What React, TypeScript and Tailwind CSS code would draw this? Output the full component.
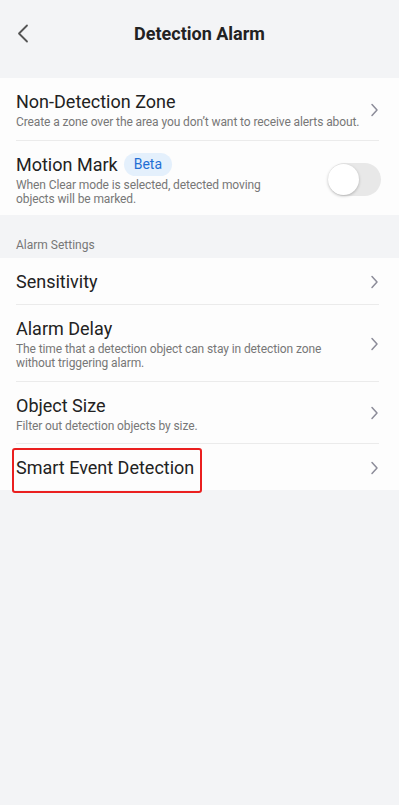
import React from "react";

function Chevron() {
  return (
    <svg width="9" height="14" viewBox="0 0 9 14" fill="none" className="shrink-0">
      <path d="M2 1.5L7 7L2 12.5" stroke="#8c8c99" strokeWidth="1.5" strokeLinecap="round" strokeLinejoin="round" />
    </svg>
  );
}

function Row({ title, desc, last, pb = "pb-[10px]", children }: { title: React.ReactNode; desc?: React.ReactNode; last?: boolean; pb?: string; children?: React.ReactNode }) {
  return (
    <div className="relative flex items-center pl-4 pr-[20px]">
      <div className={`flex-1 flex items-center pt-3 ${pb} ${last ? "" : "border-b border-[#ebebeb]"}`}>
        <div className="flex-1 min-w-0">
          <div className="text-[18px] leading-6 text-[#222]">{title}</div>
          {desc && <div className="mt-[1px] whitespace-nowrap text-[12px] leading-[14.5px] tracking-[-0.1px] text-[#777]">{desc}</div>}
        </div>
        {children ?? <Chevron />}
      </div>
    </div>
  );
}

export default function App() {
  return (
    <div className="min-h-[805px] w-[399px] bg-[#f3f4f6]" style={{ fontFamily: "Roboto, 'Noto Sans', sans-serif" }}>
      {/* header */}
      <div className="relative flex h-[78px] items-start justify-center pt-[22px]">
        <svg width="12" height="19" viewBox="0 0 12 19" fill="none" className="absolute left-[17px] top-[24px]">
          <path d="M10 1.5L2 9.5L10 17.5" stroke="#555" strokeWidth="1.8" strokeLinecap="round" strokeLinejoin="round" />
        </svg>
        <h1 className="text-[18px] font-bold leading-6 text-[#222]">Detection Alarm</h1>
      </div>

      <div className="bg-[#fdfdfd]">
        <Row title="Non-Detection Zone" desc="Create a zone over the area you don’t want to receive alerts about." />
        <Row
          last
          pb="pb-[8px]"
          title={
            <span className="flex items-center">
              Motion Mark
              <span className="ml-[6px] rounded-full bg-[#e4f0fc] px-[10px] text-[14px] leading-[23px] text-[#1f6fd4]">Beta</span>
            </span>
          }
          desc={<>When Clear mode is selected, detected moving<br />objects will be marked.</>}
        >
          <div className="relative h-[33px] w-[53px] shrink-0 -mr-[2px] rounded-full bg-[#e8e8e8]">
            <div className="absolute left-0 top-[1px] h-[31px] w-[31px] rounded-full bg-white shadow-[0_1px_3px_rgba(0,0,0,0.25)]" />
          </div>
        </Row>
      </div>

      <div className="px-4 pt-[23px] pb-[6px] text-[12px] leading-[14px] text-[#777]">Alarm Settings</div>

      <div className="bg-[#fdfdfd]">
        <Row title="Sensitivity" />
        <Row title="Alarm Delay" desc={<>The time that a detection object can stay in detection zone<br />without triggering alarm.</>} />
        <Row title="Object Size" desc="Filter out detection objects by size." />
        <div className="relative">
          <Row last title="Smart Event Detection" />
          <div className="absolute left-[12px] top-[4px] h-[45px] w-[190px] rounded-[3px] border-2 border-[#ea1f1f]" />
        </div>
      </div>
    </div>
  );
}
